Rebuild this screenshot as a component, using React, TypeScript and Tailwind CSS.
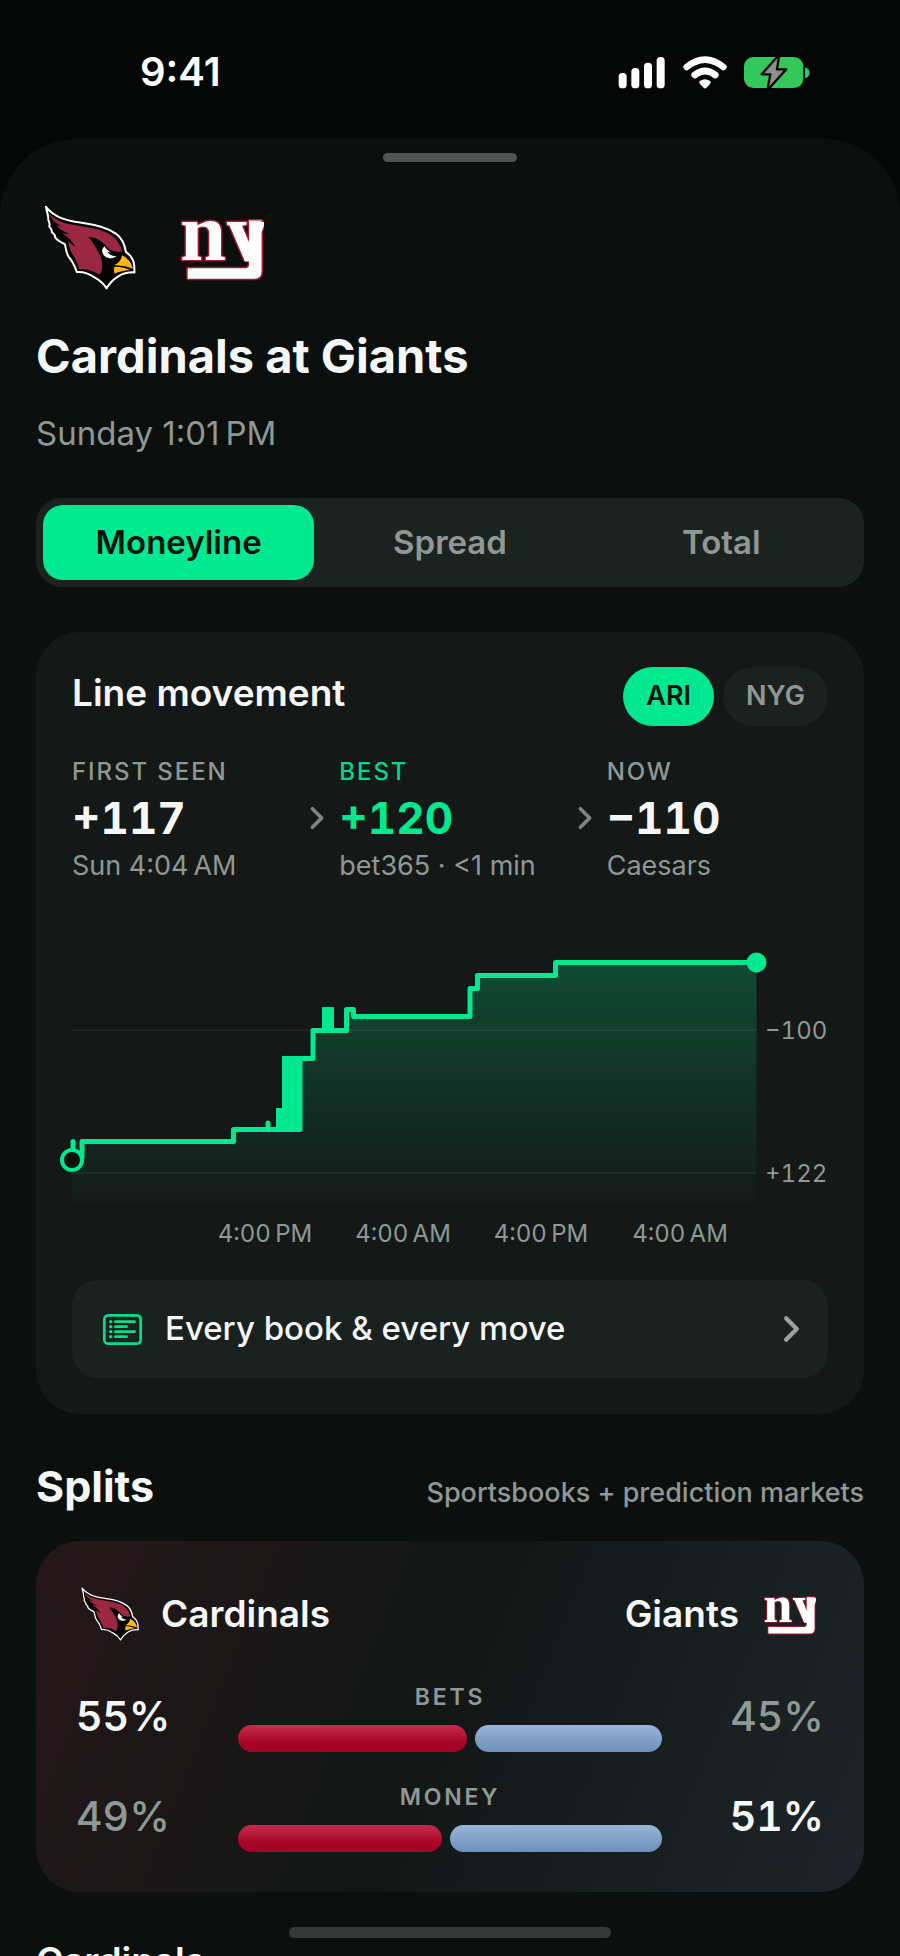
import React, { useState } from 'react';

const NNBSP = '\u202f';

const markets = ['Moneyline', 'Spread', 'Total'];
const teams = ['ARI', 'NYG'];

const prices = [
  { label: 'FIRST SEEN', value: '+117', note: `Sun 4:04${NNBSP}AM`, best: false },
  { label: 'BEST', value: '+120', note: 'bet365 · <1 min', best: true },
  { label: 'NOW', value: '−110', note: 'Caesars', best: false },
];

const splits = [
  { label: 'BETS', away: 55, home: 45 },
  { label: 'MONEY', away: 49, home: 51 },
];

const axisTicks = [
  { x: 265, text: `4:00${NNBSP}PM` },
  { x: 403, text: `4:00${NNBSP}AM` },
  { x: 541, text: `4:00${NNBSP}PM` },
  { x: 680, text: `4:00${NNBSP}AM` },
];

const linePath =
  'M73 1158V1141.5M82 1158V1141.5H233.5V1129.5H268V1123V1129.5H300V1058.5H313V1030.5H346.5V1009.5H353.5V1016.5H470V988.5H477.5V975.5H555.5V962.5H756.5';

const areaPath =
  'M72 1160V1141.5H233.5V1129.5H300V1058.5H313V1030.5H346.5V1009.5H353.5V1016.5H470V988.5H477.5V975.5H555.5V962.5H756.5V1204H72Z';

const CardinalsLogo = ({ className }: { className: string }) => (
  <svg viewBox="12 10 276 256" className={className} role="img" aria-label="Arizona Cardinals">
    <path
      d="M17 15C26 27 38 38 58 47C82 58 108 61 134 65C170 70 205 80 229 97C248 111 255 132 258 151C272 161 281 172 283 190L284 213C262 212 249 216 236 224C220 234 208 246 200 261C191 247 178 236 164 228C148 217 133 210 110 212C105 195 96 178 86 166C77 154 78 139 74 128C62 122 50 116 45 108C47 101 42 97 35 92C37 85 32 80 27 74C31 68 27 60 24 54C27 48 20 32 17 15Z"
      fill="#050505"
      stroke="#fff"
      strokeWidth="6"
      strokeLinejoin="round"
    />
    <path
      d="M28 36C46 55 66 63 90 68C122 75 166 79 196 91C225 103 240 124 247 149C234 153 218 150 206 142C190 120 168 105 145 107C159 121 171 142 181 164C188 184 191 204 178 220C157 206 137 201 118 204C113 184 104 169 94 153C87 141 87 130 84 119L106 137C98 119 83 106 67 95L90 98C71 90 56 83 50 70L72 78C53 69 36 57 28 36Z"
      fill="#9b2743"
    />
    <path d="M194 134C186 140 184 151 190 159C198 171 215 174 230 164C218 165 208 160 202 151L213 153C204 146 197 142 194 134Z" fill="#fff" />
    <path d="M247 161C264 170 276 185 279 202C259 193 239 193 223 191C236 186 244 175 247 161Z" fill="#ffb612" />
    <path d="M223 196C241 195 257 200 271 206C253 208 239 211 224 216C222 209 222 203 223 196Z" fill="#ffb612" />
  </svg>
);

const GiantsLogo = ({ className }: { className: string }) => (
  <svg viewBox="444 66 258 204" className={className} role="img" aria-label="New York Giants">
    <defs>
      <clipPath id="monogram">
        <rect x="436" y="60" width="270" height="151" />
      </clipPath>
    </defs>
    <path d="M657 86H695V240Q695 263 672 263H470V231H646Q657 231 657 219Z" stroke="#a71930" strokeWidth="9" strokeLinejoin="round" />
    <g clipPath="url(#monogram)">
      <text x="447" y="206" fontSize="252" fontWeight="700" fontFamily="'Liberation Serif', serif" fill="#fff" stroke="#a71930" strokeWidth="9" strokeLinejoin="round" paintOrder="stroke">
        ny
      </text>
    </g>
    <path d="M657 86H695V240Q695 263 672 263H470V231H646Q657 231 657 219Z" fill="#fff" />
  </svg>
);

const Chevron = ({ className }: { className: string }) => (
  <svg viewBox="0 0 16 26" className={className} fill="none" stroke="currentColor" strokeWidth="4" strokeLinecap="round" strokeLinejoin="round" aria-hidden="true">
    <path d="M3 3L13 13L3 23" />
  </svg>
);

const StatusBar = () => (
  <header className="flex items-center justify-between pt-12 pb-[43px] pl-[140px] pr-[90px]">
    <time className="text-[40px] leading-[48px] font-semibold text-white">9:41</time>
    <div className="flex items-center gap-[17px]" aria-hidden="true">
      <svg viewBox="58 50 144 99" className="w-12 h-[33px]" fill="#fff">
        <rect x="60" y="101" width="24" height="46" rx="11" />
        <rect x="98" y="86" width="24" height="61" rx="11" />
        <rect x="136" y="70" width="24" height="77" rx="11" />
        <rect x="174" y="53" width="24" height="94" rx="11" />
      </svg>
      <svg viewBox="252 48 132 99" className="w-11 h-[33px]" fill="none" stroke="#fff" strokeWidth="20" strokeLinecap="round">
        <path d="M263 81Q318 37 373 81" />
        <path d="M287 105Q318 81 349 105" />
        <path d="M307 127Q318 120 329 127L318 139Z" fill="#fff" strokeWidth="12" strokeLinejoin="round" />
      </svg>
      <svg viewBox="435 45 198 99" className="w-[66px] h-[33px]">
        <rect x="435" y="48" width="178" height="93" rx="28" fill="#34c759" />
        <path d="M618 79Q632 84 632 96Q632 108 618 112Z" fill="#34c759" />
        <path d="M541 40L488 100H514L505 148L562 85H534Z" fill="#8e8e8e" stroke="#050706" strokeWidth="7" strokeLinejoin="round" />
      </svg>
    </div>
  </header>
);

const LineChart = () => (
  <svg viewBox="72 940 756 310" className="mt-[57px] block w-full overflow-visible" role="img" aria-label="Moneyline price over time">
    <defs>
      <linearGradient id="area" x1="0" y1="962" x2="0" y2="1204" gradientUnits="userSpaceOnUse">
        <stop offset="0" stopColor="#00e890" stopOpacity="0.24" />
        <stop offset="1" stopColor="#00e890" stopOpacity="0.01" />
      </linearGradient>
    </defs>
    <path d={areaPath} fill="url(#area)" />
    <path d="M72 1030H756M72 1173H756" stroke="#ffffff" strokeOpacity="0.05" strokeWidth="2" />
    <g fill="none" stroke="#00e890" strokeWidth="5" strokeLinejoin="round" strokeLinecap="round">
      <path d={linePath} />
    </g>
    <path d="M276 1108H282V1056H302V1131H276Z" fill="#00e890" />
    <rect x="322" y="1007" width="12" height="24" rx="1" fill="#00e890" />
    <circle cx="72" cy="1160" r="10" fill="#0b100f" stroke="#00e890" strokeWidth="4" />
    <circle cx="756.5" cy="962.5" r="10" fill="#00e890" />
    <g fill="#8f9894" fontSize="24" className="tabular-nums">
      <text x="765" y="1039">−100</text>
      <text x="765" y="1182">+122</text>
      {axisTicks.map((tick) => (
        <text key={tick.x} x={tick.x} y="1242" textAnchor="middle">
          {tick.text}
        </text>
      ))}
    </g>
  </svg>
);

const LineMovement = () => {
  const [team, setTeam] = useState('ARI');

  return (
    <section className="mt-[45px] rounded-[44px] bg-[#141817] px-9 pt-[35px] pb-9">
      <div className="flex items-start justify-between">
        <h2 className="text-[37px] leading-[52px] font-semibold text-[#f4f7f6]">Line movement</h2>
        <div className="flex gap-[9px]">
          {teams.map((name) => (
            <button
              key={name}
              type="button"
              onClick={() => setTeam(name)}
              aria-pressed={team === name}
              className={
                team === name
                  ? 'h-[59px] rounded-full bg-[#00e890] px-[23px] text-[27px] font-semibold text-[#08150f]'
                  : 'h-[59px] rounded-full bg-[#1a211f] px-[23px] text-[27px] font-semibold text-[#8f9894]'
              }
            >
              {name}
            </button>
          ))}
        </div>
      </div>

      <div className="mt-[31px] grid grid-cols-3 gap-[46px]">
        {prices.map((price, i) => (
          <div key={price.label} className="whitespace-nowrap">
            <div className={price.best ? 'text-[24px] leading-[30px] font-medium tracking-[0.08em] text-[#00d987]' : 'text-[24px] leading-[30px] font-medium tracking-[0.08em] text-[#8f9894]'}>
              {price.label}
            </div>
            <div className="mt-[3px] -mr-8 flex items-center justify-between">
              <span className={price.best ? 'text-[44px] leading-[56px] font-bold tabular-nums text-[#00e890]' : 'text-[44px] leading-[56px] font-bold tabular-nums text-[#f4f7f6]'}>
                {price.value}
              </span>
              {i < prices.length - 1 && <Chevron className="h-6 w-4 text-[#7c8581]" />}
            </div>
            <div className="mt-[3px] text-[27px] leading-[34px] text-[#8f9894]">{price.note}</div>
          </div>
        ))}
      </div>

      <LineChart />

      <button type="button" className="mt-[30px] flex h-[98px] w-full items-center rounded-[26px] bg-[#1a2220] pr-7 pl-[31px] text-left">
        <svg viewBox="21 29 117 93" className="h-[31px] w-[39px]" fill="none" stroke="#00e08b" strokeWidth="8" strokeLinecap="round" aria-hidden="true">
          <rect x="25" y="33" width="109" height="85" rx="12" />
          <path d="M58 52H116M58 67H92M58 82H116M58 97H92" />
          <path d="M44 52H44.1M44 67H44.1M44 82H44.1M44 97H44.1" strokeWidth="10" />
        </svg>
        <span className="ml-[23px] flex-1 text-[33px] font-medium text-[#f4f7f6]">Every book &amp; every move</span>
        <Chevron className="h-7 w-[17px] text-[#9aa39f]" />
      </button>
    </section>
  );
};

const Splits = () => (
  <section>
    <div className="mt-[45px] flex items-baseline justify-between">
      <h2 className="text-[43px] leading-[54px] font-bold text-[#f4f7f6]">Splits</h2>
      <p className="text-[27px] font-medium text-[#8f9894]">Sportsbooks + prediction markets</p>
    </div>

    <div className="mt-[27px] rounded-[44px] bg-linear-[112deg,#27161a_0%,#1b1717_22%,#121716_48%,#151d1c_68%,#1d252a_100%] px-10 pt-[46px] pb-10">
      <div className="flex items-center justify-between text-[37px] leading-[54px] font-semibold text-[#f4f7f6]">
        <div className="flex items-center gap-[22px] pl-[5px]">
          <CardinalsLogo className="h-[54px] w-[58px]" />
          <h3>Cardinals</h3>
        </div>
        <div className="flex items-center gap-6 pr-2">
          <h3>Giants</h3>
          <GiantsLogo className="h-[42px] w-[53px]" />
        </div>
      </div>

      <div className="mt-[42px] flex flex-col gap-[31px]">
        {splits.map((row) => (
          <div key={row.label} className="flex items-center text-[41px] tabular-nums">
            <span className={row.away > row.home ? 'w-[162px] font-semibold text-[#f4f7f6]' : 'w-[162px] font-medium text-[#8f9894]'}>{row.away}%</span>
            <div className="flex-1">
              <div className="text-center text-[23px] leading-7 font-semibold tracking-[0.12em] text-[#8f9894]">{row.label}</div>
              <div className="mt-[14px] flex h-[27px] gap-2">
                <div className="rounded-full bg-linear-to-b from-[#c92a50] via-[#a90529] via-60% to-[#a20025]" style={{ flexGrow: row.away }} />
                <div className="rounded-full bg-linear-to-b from-[#9ab4d6] to-[#6d90bb]" style={{ flexGrow: row.home }} />
              </div>
            </div>
            <span className={row.home > row.away ? 'w-[162px] text-right font-semibold text-[#f4f7f6]' : 'w-[162px] text-right font-medium text-[#8f9894]'}>{row.home}%</span>
          </div>
        ))}
      </div>
    </div>
  </section>
);

const App = () => {
  const [market, setMarket] = useState('Moneyline');

  return (
    <div className="relative flex h-screen flex-col overflow-hidden bg-[#050706] font-['Inter',sans-serif]">
      <StatusBar />
      <main className="min-h-0 flex-1 overflow-hidden rounded-t-[76px] bg-[#0b100f] px-9 pt-[14px]">
        <div className="mx-auto h-[9px] w-[134px] rounded-full bg-[#505554]" />

        <div className="mt-[43px] flex items-center gap-[43px] pl-2">
          <CardinalsLogo className="h-[85px] w-[92px]" />
          <GiantsLogo className="h-[67px] w-[85px]" />
        </div>
        <h1 className="mt-[36px] text-[47px] leading-[60px] font-bold text-[#f4f7f6]">Cardinals at Giants</h1>
        <p className="mt-[27px] text-[33px] leading-10 text-[#8f9894]">Sunday 1:01{NNBSP}PM</p>

        <div className="mt-[45px] grid grid-cols-3 rounded-[26px] bg-[#1b2320] p-[7px]">
          {markets.map((name) => (
            <button
              key={name}
              type="button"
              onClick={() => setMarket(name)}
              aria-pressed={market === name}
              className={
                market === name
                  ? 'h-[75px] rounded-[20px] bg-[#00e890] text-[33px] font-semibold text-[#08150f]'
                  : 'h-[75px] rounded-[20px] text-[33px] font-semibold text-[#8f9894]'
              }
            >
              {name}
            </button>
          ))}
        </div>

        <LineMovement />
        <Splits />

        <h2 className="mt-[42px] text-[37px] leading-[54px] font-semibold text-[#f4f7f6]">Cardinals</h2>
      </main>
      <div className="absolute bottom-[18px] left-1/2 h-[11px] w-[322px] -translate-x-1/2 rounded-full bg-[#343837]" />
    </div>
  );
};

export default App;
